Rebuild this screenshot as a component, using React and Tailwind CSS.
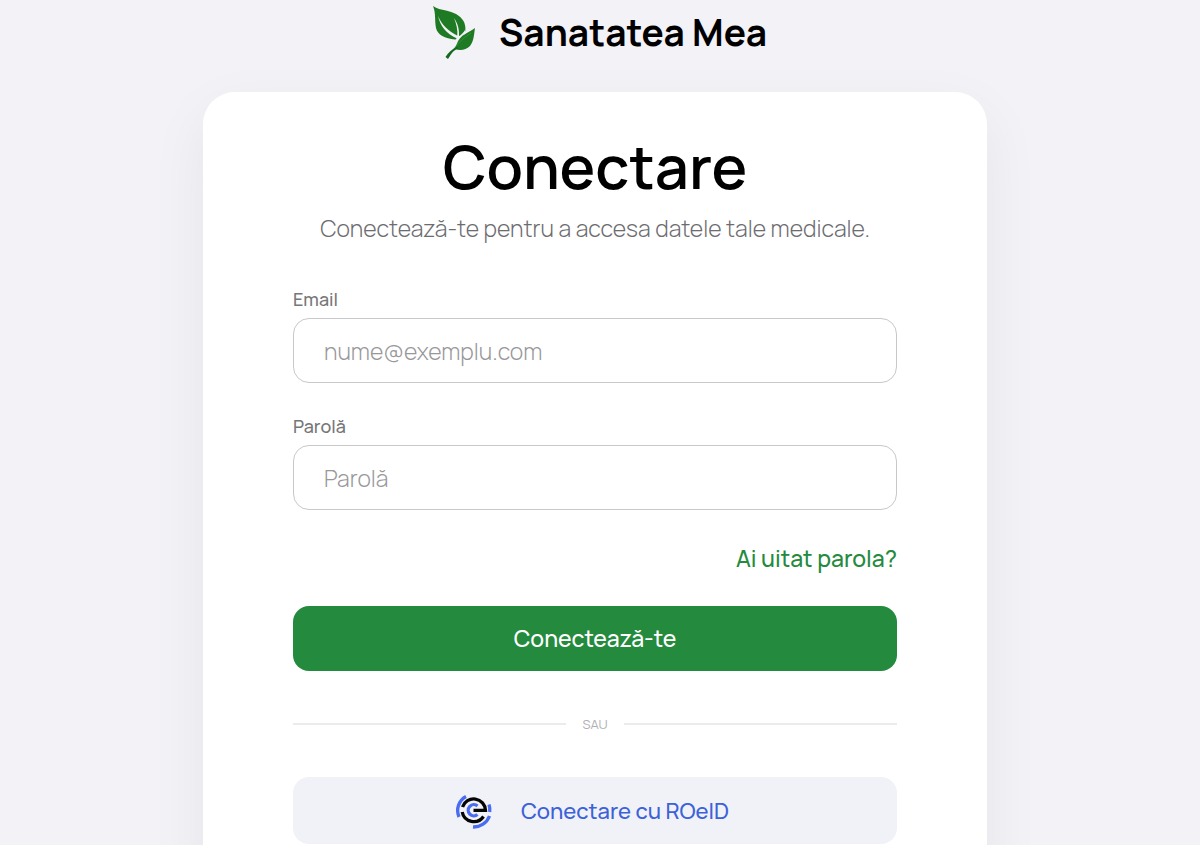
import { useState } from "react"

function LeafLogo() {
  return (
    <svg width="42" height="54" viewBox="0 0 42 54" aria-hidden="true">
      <path d="M0 1C4 4 8 4.500 13 5.500C20 7 27 10 30.500 16C33 21 33 26 31 30L26 33.500L22 34.500C12 33.500 4.500 30 3 23C1.500 15 3 8 0 1Z" fill="#1f7a24" />
      <path d="M42 23C41 29 41 36 37 41C33 45 27 46 22 44C21.500 38 25 34 30 30.500C34 27.500 38 26 42 23Z" fill="#1f7a24" />
      {/* veins */}
      <path d="M5 11C9 20 15 26 25 31L24 33.500C13 29 7 20 5 11Z" fill="#f2f2f7" />
      <path d="M21 13C24.500 18 26.500 24 26 31L24.300 31C24.800 25 23.500 19 21 13Z" fill="#f2f2f7" />
      <path d="M24.500 30L26.500 31C29 29 31 27 32 25L32.500 28.500C28 31.500 25 35 24 38.500L22 43L20 42C22 38 23.500 34 24.500 30Z" fill="#f2f2f7" />
      <path d="M38 28C30 33 24 39 20.500 45" fill="none" stroke="#3b9440" strokeWidth="0.8" />
      <path d="M24 41.500C19 44 15 48 12.500 52L15 54C18 50 19 46 25 43.500Z" fill="#14691c" />
    </svg>
  )
}

function RoeidLogo() {
  return (
    <svg width="38" height="36" viewBox="0 0 38 36" fill="none" strokeWidth="3.3" aria-hidden="true">
      <path d="M11 2.500A16 16 0 0 0 4 23" stroke="#4a6cf0" />
      <path d="M34 10.500A16 16 0 0 1 34.700 18" stroke="#4a6cf0" />
      <path d="M34.500 22A16.800 16.800 0 0 1 18 33" stroke="#4a6cf0" />
      <path d="M7.500 13A11.800 11.800 0 0 1 30.500 16.300H18.500" stroke="#050505" />
      <path d="M7.200 18A11.800 11.800 0 0 0 28.500 22.500" stroke="#050505" />
      <path d="M22.500 12A5.600 5.600 0 1 0 22.500 20.500" stroke="#4a6cf0" />
    </svg>
  )
}

function Field({ id, label, ...props }) {
  return (
    <div className="flex flex-col gap-2">
      <label htmlFor={id} className="text-lg leading-[22px] font-medium text-[#777779]">
        {label}
      </label>
      <input
        id={id}
        className="h-[65px] w-full rounded-2xl border border-[#c8c8cb] bg-white px-[30px] text-[23px] font-light text-[#1c1c1e] placeholder:text-[#98989b] outline-none focus:border-[#248a3d]"
        {...props}
      />
    </div>
  )
}

export default function App() {
  const [email, setEmail] = useState("")
  const [password, setPassword] = useState("")

  return (
    <div className="min-h-screen bg-[#f2f2f7] pt-1 pb-16 font-['Manrope','Inter',sans-serif] text-black">
      {/* Brand */}
      <header className="flex h-14 items-center justify-center gap-6">
        <LeafLogo />
        <span className="text-[37px] leading-none font-bold">Sanatatea Mea</span>
      </header>

      {/* Login card */}
      <main className="mt-8 flex justify-center pr-[10px]">
        <section className="w-full max-w-[784px] rounded-4xl bg-white px-6 pt-10 pb-16 shadow-[0_20px_60px_rgba(0,0,0,0.06)] md:px-[90px]">
          <div className="text-center">
            <h1 className="text-6xl leading-[68px] font-semibold">Conectare</h1>
            <p className="mt-3 text-[23px] leading-8 font-light text-[#6c6c70]">
              Conectează-te pentru a accesa datele tale medicale.
            </p>
          </div>

          <form className="mt-11" onSubmit={(e) => e.preventDefault()}>
            <div className="flex flex-col gap-8">
              <Field
                id="email"
                label="Email"
                type="email"
                placeholder="nume@exemplu.com"
                value={email}
                onChange={(e) => setEmail(e.target.value)}
              />
              <Field
                id="password"
                label="Parolă"
                type="password"
                placeholder="Parolă"
                value={password}
                onChange={(e) => setPassword(e.target.value)}
              />
            </div>
            <div className="mt-8 flex justify-end">
              <a href="#" className="text-[23px] leading-8 font-medium text-[#248a3d]">
                Ai uitat parola?
              </a>
            </div>
            <button type="submit" className="mt-8 h-[65px] w-full rounded-2xl bg-[#248a3d] text-[23px] font-medium text-white">
              Conectează-te
            </button>
          </form>

          {/* Divider */}
          <div className="my-[45px] flex items-center gap-4 text-[13px] leading-4 text-[#b0b0b3]">
            <span className="h-0.5 flex-1 bg-[#ebebed]" />
            SAU
            <span className="h-0.5 flex-1 bg-[#ebebed]" />
          </div>

          <button type="button" className="flex h-[67px] w-full items-center justify-center gap-7 rounded-2xl bg-[#f1f2f8] pt-0.5 pr-1.5 text-[22px] font-medium text-[#3c62d8]">
            <RoeidLogo />
            Conectare cu ROeID
          </button>
        </section>
      </main>
    </div>
  )
}
